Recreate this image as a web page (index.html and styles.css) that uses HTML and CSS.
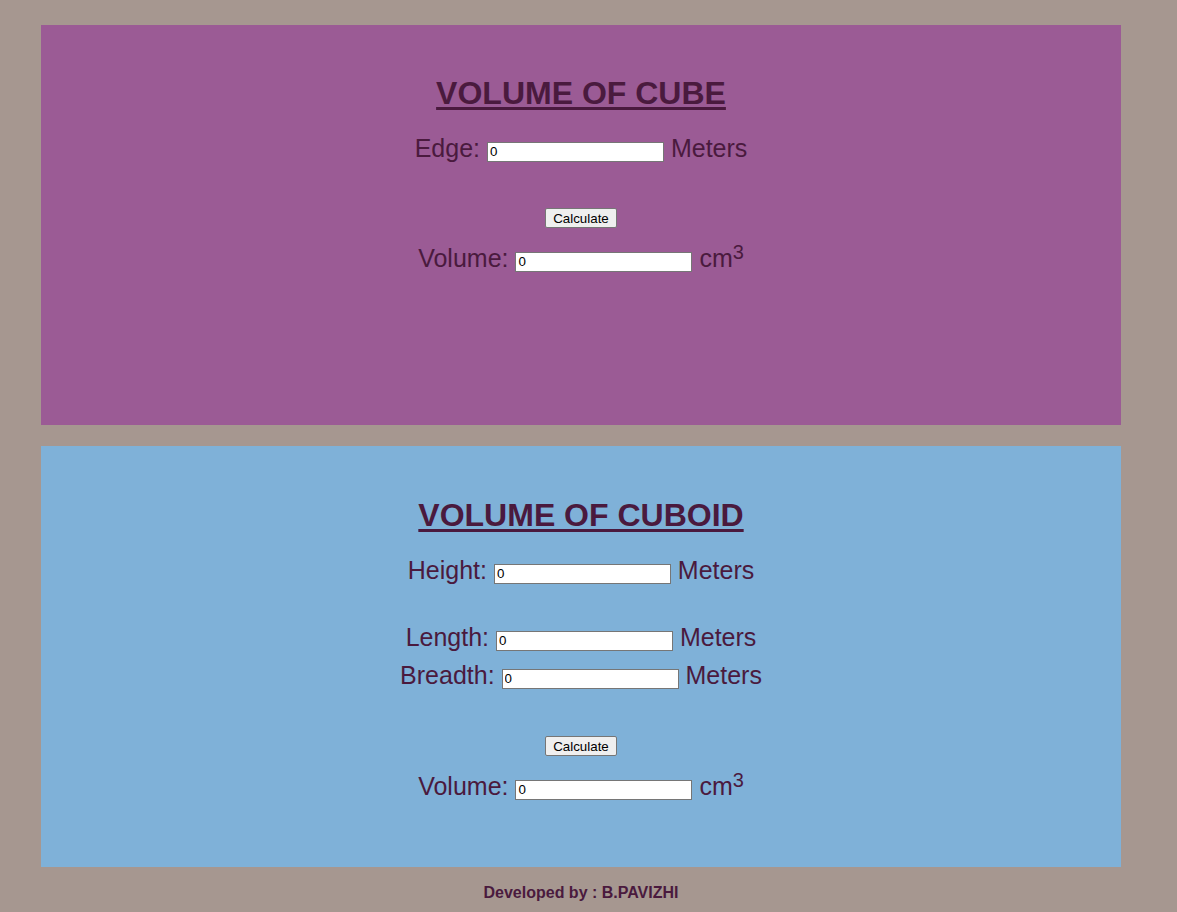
FILE: index.html
```html
<!DOCTYPE html>
<html lang="en">
<head>
<meta charset="utf-8">
<title>Volume Calculator</title>
<link rel="stylesheet" href="styles.css">
</head>
<body>
<div class="page">
  <section class="panel panel-cube">
    <h1 class="title">VOLUME OF CUBE</h1>
    <div class="row row-first">Edge: <input class="field" type="text" value="0"> Meters</div>
    <div class="btn-row btn-row-cube"><button class="btn" type="button">Calculate</button></div>
    <div class="row row-result">Volume: <input class="field" type="text" value="0"> cm<sup class="sup">3</sup></div>
  </section>

  <section class="panel panel-cuboid">
    <h1 class="title">VOLUME OF CUBOID</h1>
    <div class="row row-first">Height: <input class="field" type="text" value="0"> Meters</div>
    <div class="row row-length">Length: <input class="field" type="text" value="0"> Meters</div>
    <div class="row row-breadth">Breadth: <input class="field" type="text" value="0"> Meters</div>
    <div class="btn-row btn-row-cuboid"><button class="btn" type="button">Calculate</button></div>
    <div class="row row-result">Volume: <input class="field" type="text" value="0"> cm<sup class="sup">3</sup></div>
  </section>

  <footer class="footer">Developed by : B.PAVIZHI</footer>
</div>
</body>
</html>
```

FILE: styles.css
```css
html, body {
  margin: 0;
  padding: 0;
}

body {
  background: #a69790;
  color: #4a1a3e;
  font-family: "Liberation Sans", Arial, sans-serif;
}

.page {
  width: 1080px;
  margin: 0 0 0 41px;
  padding-top: 25px;
  padding-bottom: 20px;
}

.panel {
  box-sizing: border-box;
  text-align: center;
}

.panel-cube {
  background: #9b5b95;
  height: 400px;
  padding-top: 50px;
}

.panel-cuboid {
  background: #7fb1d8;
  height: 421px;
  margin-top: 21px;
  padding-top: 51px;
}

.title {
  margin: 0;
  font-size: 32px;
  line-height: 37px;
  font-weight: bold;
  text-decoration: underline;
  text-decoration-thickness: 3px;
  text-underline-offset: 3px;
  color: #4a1a3e;
}

.row {
  font-size: 25px;
  line-height: 29px;
  height: 29px;
  white-space: nowrap;
}

.row-first { margin-top: 22px; }
.row-length { margin-top: 38px; }
.row-breadth { margin-top: 9px; }
.row-result { margin-top: 16px; }

.field {
  box-sizing: border-box;
  width: 177px;
  height: 20px;
  padding: 1px 2px;
  border: 1px solid #767676;
  border-radius: 0;
  background: #fff;
  color: #000;
  font-family: "Liberation Sans", Arial, sans-serif;
  font-size: 13.33px;
  vertical-align: 1px;
}

.sup {
  font-size: 20px;
  line-height: 0;
  vertical-align: 8px;
}

.btn-row {
  height: 20px;
  line-height: 0;
}

.btn-row-cube { margin-top: 45px; }
.btn-row-cuboid { margin-top: 46px; }

.btn {
  box-sizing: border-box;
  height: 20px;
  padding: 0 7px;
  border: 1px solid #767676;
  border-radius: 2px;
  background: #efefef;
  color: #000;
  font-family: "Liberation Sans", Arial, sans-serif;
  font-size: 13.33px;
  line-height: 17px;
  vertical-align: top;
}

.footer {
  margin-top: 17px;
  text-align: center;
  font-size: 16px;
  line-height: 18px;
  font-weight: bold;
  color: #4a1a3e;
}
```
